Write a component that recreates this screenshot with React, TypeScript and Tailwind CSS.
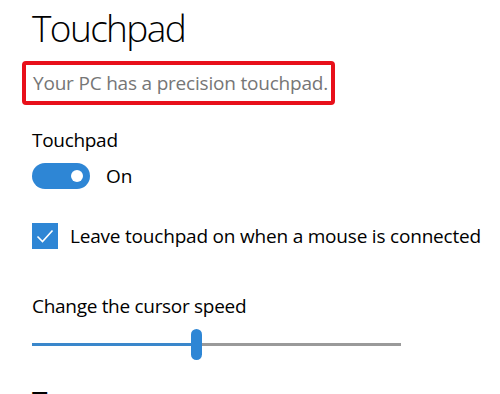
import React from "react";

export default function App() {
  return (
    <div
      className="w-[500px] h-[394px] overflow-hidden bg-white text-black"
      style={{ fontFamily: '"Open Sans", "Noto Sans", sans-serif' }}
    >
      <div className="pl-8">
        <h1 className="text-[37px] leading-[44px] font-light tracking-[-1.6px] pt-[6px] h-[61px]">Touchpad</h1>
        <div className="ml-[-10px] w-[313px] h-[44px] border-[4px] border-[#e8101a] rounded-[4px] flex items-center pl-[7px]">
          <span className="text-[19px] text-[#767676] tracking-[-0.2px] whitespace-nowrap">Your PC has a precision touchpad.</span>
        </div>
        <div className="mt-[22px] text-[19px] leading-[26px] tracking-[-0.3px]">Touchpad</div>
        <div className="mt-[10px] flex items-center h-[26px]">
          <div className="w-[58px] h-[26px] rounded-full bg-[#2e86d5] flex items-center justify-end pr-[7px]">
            <div className="w-[12px] h-[12px] rounded-full bg-white" />
          </div>
          <span className="ml-[16px] text-[19px] leading-[26px]">On</span>
        </div>
        <div className="mt-[34px] flex items-center h-[26px]">
          <div className="w-[26px] h-[26px] bg-[#2e86d5] flex items-center justify-center">
            <svg width="20" height="20" viewBox="0 0 20 20" fill="none">
              <path d="M2.5 10.5 L7.5 15.5 L17.5 4.5" stroke="white" strokeWidth="1.6" />
            </svg>
          </div>
          <span className="ml-[12px] text-[19px] leading-[26px] tracking-[-0.2px] whitespace-nowrap">Leave touchpad on when a mouse is connected</span>
        </div>
        <div className="mt-[44px] text-[19px] leading-[26px] tracking-[-0.3px]">Change the cursor speed</div>
        <div className="mt-[10px] relative w-[369px] h-[31px] flex items-center">
          <div className="h-[3px] w-[159px] bg-[#3a87cb]" />
          <div className="h-[3px] flex-1 bg-[#9a9a9a]" />
          <div className="absolute left-[159px] top-0 w-[11px] h-[31px] rounded-full bg-[#2e86d5]" />
        </div>
        <div className="mt-[23px] text-[28px] leading-[36px] font-normal">Taps</div>
      </div>
    </div>
  );
}
